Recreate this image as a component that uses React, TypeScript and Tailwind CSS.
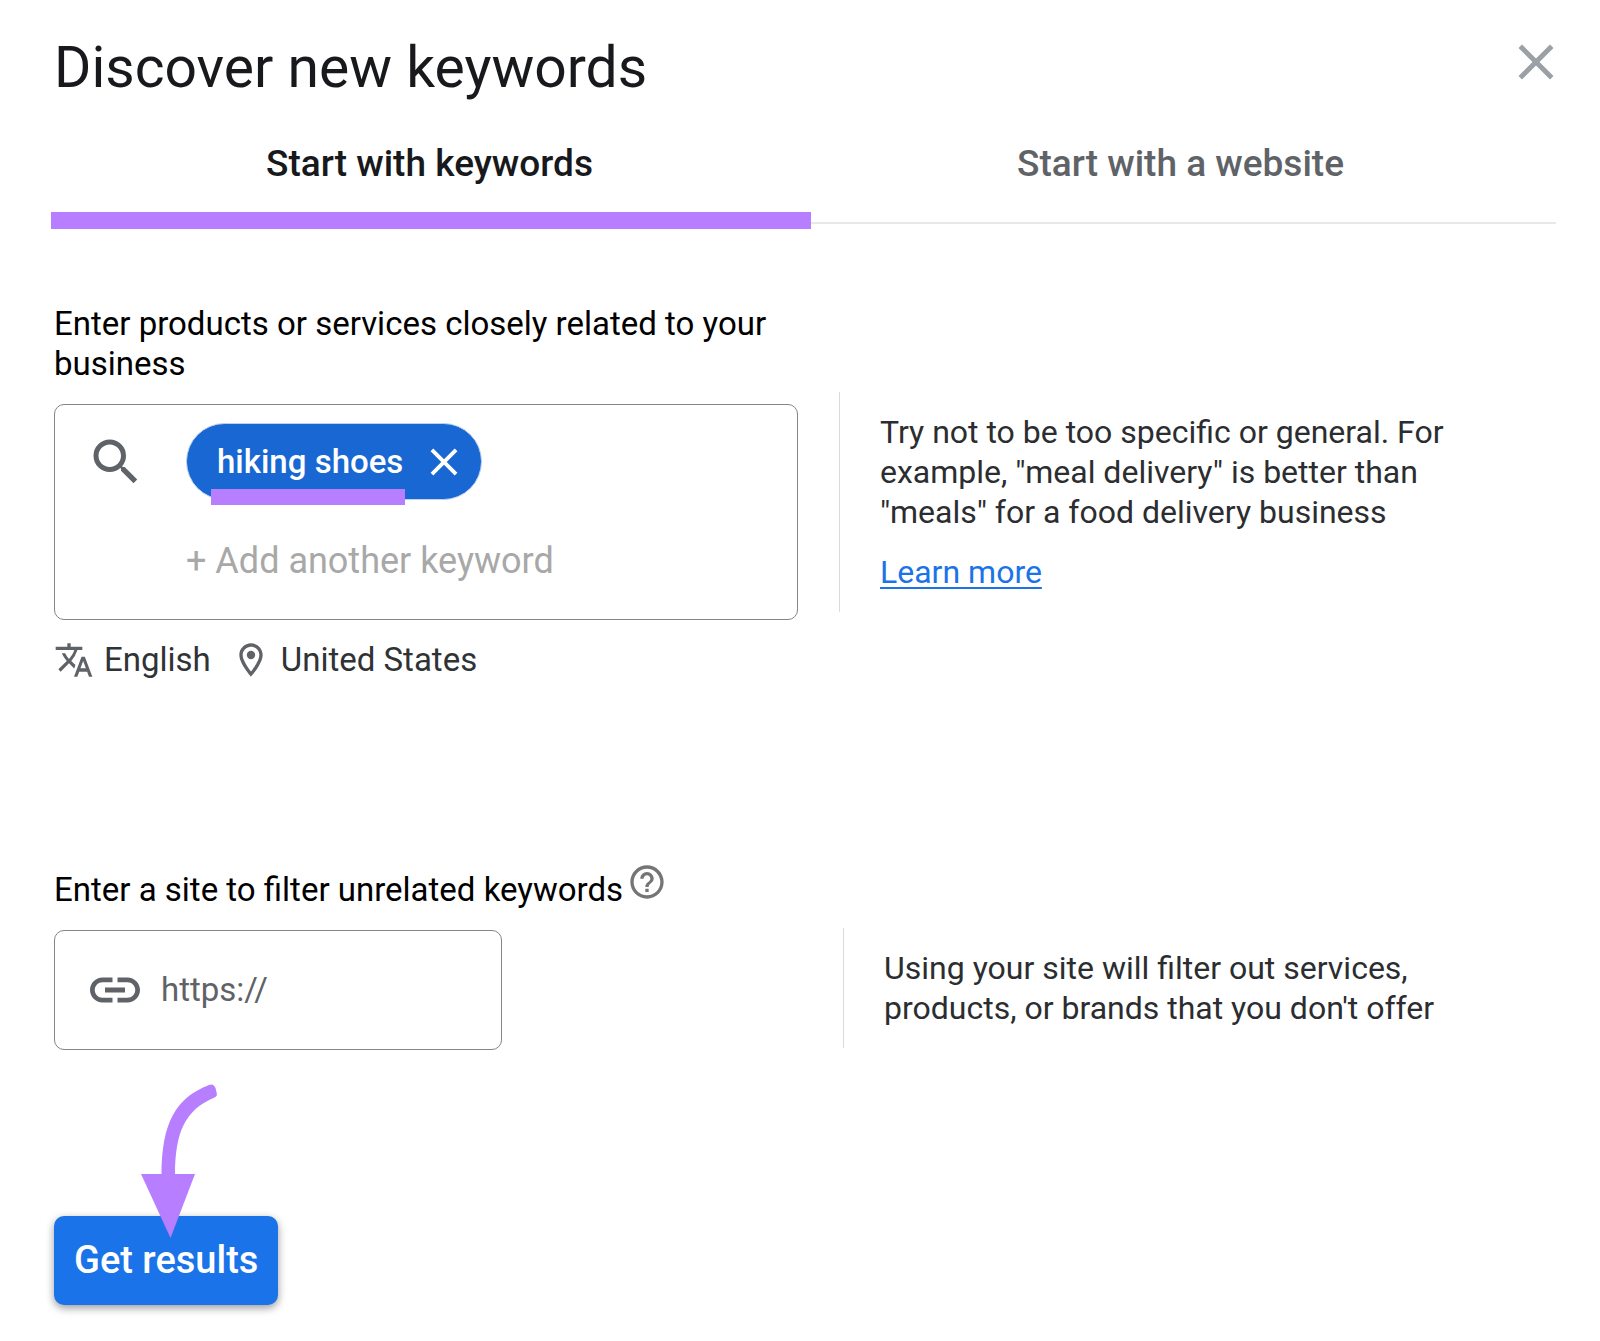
import { useState } from "react";
import {
  MdClose,
  MdHelpOutline,
  MdLink,
  MdOutlineLocationOn,
  MdSearch,
  MdTranslate,
} from "react-icons/md";

type TabId = "keywords" | "website";

const TABS: { id: TabId; label: string }[] = [
  { id: "keywords", label: "Start with keywords" },
  { id: "website", label: "Start with a website" },
];

function Tabs({ active, onChange }: { active: TabId; onChange: (id: TabId) => void }) {
  return (
    <div role="tablist" className="grid grid-cols-2 border-b-2 border-[#e8e8e8]">
      {TABS.map((tab) => (
        <button
          key={tab.id}
          type="button"
          role="tab"
          aria-selected={active === tab.id}
          onClick={() => onChange(tab.id)}
          className={`relative pt-11 pb-[38px] text-[37px] leading-10 font-medium ${
            active === tab.id ? "text-[#18191c]" : "text-[#5f6368]"
          }`}
        >
          {tab.label}
          {active === tab.id && (
            <span className="absolute -left-[3px] -right-1.5 -bottom-[7px] h-[17px] bg-[#b77fff]" />
          )}
        </button>
      ))}
    </div>
  );
}

function Chip({ label, onRemove }: { label: string; onRemove: () => void }) {
  return (
    <span className="relative inline-flex h-[77px] items-center gap-[18px] rounded-full border border-[#bfd1ee] bg-[#1967d2] pl-[30px] pr-3.5 text-white">
      <span className="text-[33px] leading-10 font-medium">{label}</span>
      <button type="button" aria-label={`Remove ${label}`} onClick={onRemove}>
        <MdClose size={46} />
      </button>
      {/* highlight under the keyword */}
      <span className="absolute left-6 right-[76px] -bottom-1.5 h-4 bg-[#b77fff]" />
    </span>
  );
}

function ArrowCallout() {
  return (
    <svg
      className="pointer-events-none absolute left-[86px] -top-[134px]"
      width="80"
      height="158"
      viewBox="0 0 80 158"
      fill="#b77fff"
      aria-hidden="true"
    >
      <path d="M69 3C36 16 21.500 40 21.500 94H35C35 50 45 28 74.500 15.500Q77.500 14 76.800 11.500L75.500 6Q73.500 1 69 3Z" />
      <path d="M1 92H55L30.500 156Z" />
    </svg>
  );
}

export default function App() {
  const [tab, setTab] = useState<TabId>("keywords");
  const [keywords, setKeywords] = useState<string[]>(["hiking shoes"]);
  const [draft, setDraft] = useState("");
  const [site, setSite] = useState("");

  function addKeyword() {
    const value = draft.trim();
    if (!value) return;
    setKeywords((prev) => [...prev, value]);
    setDraft("");
  }

  return (
    <main className="min-h-screen bg-white pl-[54px] pr-11 pt-9 pb-9 font-['Roboto',sans-serif] text-[#202124]">
      {/* Header */}
      <div className="flex items-start justify-between">
        <h1 className="text-[57px] leading-16 text-[#18191c]">Discover new keywords</h1>
        <button type="button" aria-label="Close" className="-mr-2.5 -mt-1 text-[#9aa0a6]">
          <MdClose size={60} />
        </button>
      </div>

      <Tabs active={tab} onChange={setTab} />

      {/* Keywords */}
      <section className="mt-20 grid grid-cols-2">
        <div className="pr-[7px]">
          <label htmlFor="keyword" className="block text-[33px] leading-10 text-black">
            Enter products or services closely related to your business
          </label>
          <div className="mt-5 flex gap-10 rounded-[10px] border border-[#80868b] pl-[31px] pr-6 pt-[18px] pb-9">
            <MdSearch size={60} className="mt-[9px] shrink-0 text-[#5f6368]" />
            <div className="min-w-0 grow">
              <div className="flex flex-wrap gap-3">
                {keywords.map((word) => (
                  <Chip
                    key={word}
                    label={word}
                    onRemove={() => setKeywords((prev) => prev.filter((k) => k !== word))}
                  />
                ))}
              </div>
              <input
                id="keyword"
                value={draft}
                onChange={(e) => setDraft(e.target.value)}
                onKeyDown={(e) => e.key === "Enter" && addKeyword()}
                placeholder="+ Add another keyword"
                className="mt-[39px] block h-11 w-full text-[36px] outline-none placeholder:text-[#a8a8a8]"
              />
            </div>
          </div>
          <div className="mt-5 flex items-center text-[33px] leading-10 text-[#303336]">
            <MdTranslate size={40} className="text-[#5f6368]" />
            <span className="ml-2.5">English</span>
            <MdOutlineLocationOn size={40} className="ml-5 text-[#5f6368]" />
            <span className="ml-2.5">United States</span>
          </div>
        </div>

        <div className="pl-[34px] pt-[88px]">
          <div className="border-l border-[#dadada] py-5 pl-10 text-[32px] leading-10 text-[#2b2d30]">
            <p className="max-w-[600px]">
              Try not to be too specific or general. For example, "meal delivery" is better than "meals" for a food
              delivery business
            </p>
            <a href="#learn-more" className="mt-5 inline-block text-[#1a73e8] underline decoration-2 underline-offset-4">
              Learn more
            </a>
          </div>
        </div>
      </section>

      {/* Site filter */}
      <section className="mt-[190px] grid grid-cols-2">
        <div className="pr-1">
          <div className="flex h-10 items-center gap-1">
            <label htmlFor="site" className="text-[33px] leading-10 text-black">
              Enter a site to filter unrelated keywords
            </label>
            <button type="button" aria-label="Help" className="mb-4 text-[#757575]">
              <MdHelpOutline size={40} />
            </button>
          </div>
          <div className="mt-5 flex h-[120px] w-3/5 items-center gap-4 rounded-[10px] border border-[#80868b] pl-[30px] pr-4">
            <MdLink size={60} className="shrink-0 text-[#5f6368]" />
            <input
              id="site"
              type="url"
              value={site}
              onChange={(e) => setSite(e.target.value)}
              placeholder="https://"
              className="h-11 w-full min-w-0 text-[33px] outline-none placeholder:text-[#5f6368]"
            />
          </div>
        </div>

        <div className="pl-[38px] pt-[58px]">
          <div className="border-l border-[#dadada] py-5 pl-10 text-[32px] leading-10 text-[#2b2d30]">
            <p className="max-w-[600px]">
              Using your site will filter out services, products, or brands that you don't offer
            </p>
          </div>
        </div>
      </section>

      {/* Submit */}
      <div className="relative mt-[166px] inline-block">
        <button
          type="button"
          className="block h-[89px] rounded-[10px] bg-[#1a73e8] px-5 text-[38px] font-medium text-white shadow-[0_3px_8px_rgba(0,0,0,0.4)]"
        >
          Get results
        </button>
        <ArrowCallout />
      </div>
    </main>
  );
}
